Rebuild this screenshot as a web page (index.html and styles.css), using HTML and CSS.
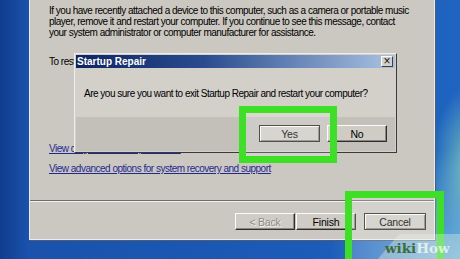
FILE: index.html
```html
<!DOCTYPE html>
<html>
<head>
	<meta charset="UTF-8">
	<title>Startup Repair</title>
	<link rel="stylesheet" href="styles.css">
</head>
<body>
<div class="screen">
	<div class="window">
		<p class="msg">If you have recently attached a device to this computer, such as a camera or portable music<br>
		player, remove it and restart your computer. If you continue to see this message, contact<br>
		your system administrator or computer manufacturer for assistance.</p>
		<p class="restart">To restart your computer, click Finish.</p>
		<a class="link link-details" href="#">View diagnostic and repair details</a>
		<a class="link link-advanced" href="#">View advanced options for system recovery and support</a>
		<div class="footer">
			<button class="btn btn-back" disabled>&lt; Back</button>
			<button class="btn btn-finish">Finish</button>
			<button class="btn btn-cancel">Cancel</button>
		</div>
	</div>

	<!-- confirm box over the wizard -->
	<div class="dialog">
		<div class="titlebar">
			<span>Startup Repair</span>
			<span class="close">×</span>
		</div>
		<div class="dialog-body">Are you sure you want to exit Startup Repair and restart your computer?</div>
		<div class="dialog-buttons">
			<button class="btn btn-default btn-yes">Yes</button>
			<button class="btn btn-no">No</button>
		</div>
	</div>

	<div class="highlight hl-yes"></div>
	<div class="highlight hl-cancel"></div>
	<div class="wikihow"><span class="wiki">wiki</span><span class="how">How</span></div>
</div>
</body>
</html>
```

FILE: styles.css
```css
body {
	margin: 0;
}
.screen {
	position: relative;
	width: 460px;
	height: 259px;
	overflow: hidden;
	font-family: "Liberation Sans", Arial, sans-serif;
	font-size: 10px;
	letter-spacing: -0.5px;
	background:
		radial-gradient(ellipse 40px 80px at 472px 165px, rgba(150, 225, 190, 0.75), transparent),
		radial-gradient(ellipse 140px 110px at 470px 259px, rgba(120, 190, 225, 0.9), transparent),
		linear-gradient(90deg, #113c8e 0, #1a52ac 28px, #1b5ab6 60%, #1f64c0 100%);
}
.window {
	box-sizing: border-box;
	display: flex;
	flex-direction: column;
	width: 406px;
	height: 240px;
	margin-left: 29px;
	background: #cbc8c1;
	border: 1px solid #ecebe7;
	border-top: none;
	box-shadow: 1px 1px 0 #4c5d7a;
}
.msg {
	margin: 0;
	padding: 5px 0 0 19px;
	line-height: 11px;
	white-space: nowrap;
}
.restart {
	margin: 18px 0 0 19px;
	line-height: 11px;
}
.link {
	display: block;
	margin-left: 19px;
	line-height: 11px;
	color: #1f2a8c;
}
.link-details {
	margin-top: 76px;
}
.link-advanced {
	margin-top: 9px;
}
.footer {
	display: flex;
	justify-content: flex-end;
	margin-top: auto;
	height: 39px;
	box-sizing: border-box;
	padding: 12px 8px 0 0;
	border-top: 1px solid #6f6d68;
	box-shadow: inset 0 1px 0 #f2f1ed;
}
.btn {
	box-sizing: border-box;
	height: 17px;
	width: 60px;
	padding: 0;
	font-family: inherit;
	font-size: 10.5px;
	letter-spacing: -0.2px;
	color: #000;
	background: #cfccc5;
	border: 1px solid;
	border-color: #fbfbf8 #2e2e2e #2e2e2e #fbfbf8;
	box-shadow: inset -1px -1px 0 #8a8780;
}
.btn-back {
	color: #8c8a85;
	text-shadow: 1px 1px 0 #f2f2ef;
}
.btn-finish {
	margin-left: 1px;
}
.btn-cancel {
	width: 62px;
	margin-left: 8px;
	border-color: #2e2e2e;
	box-shadow: inset 1px 1px 0 #fbfbf8, inset -1px -1px 0 #8a8780;
}
.dialog {
	position: absolute;
	left: 74px;
	top: 53px;
	width: 323px;
	height: 100px;
	box-sizing: border-box;
	display: flex;
	flex-direction: column;
	padding: 1px;
	background: #d3d0ca;
	border: 1px solid;
	border-color: #eeede9 #3a3a3a #3a3a3a #eeede9;
}
.titlebar {
	display: flex;
	align-items: center;
	justify-content: space-between;
	height: 13px;
	padding: 0 2px 0 1px;
	font-weight: bold;
	letter-spacing: 0;
	color: #fff;
	background: linear-gradient(90deg, #0c2465 0, #2a4c8e 40%, #a9c3e2 100%);
}
.close {
	box-sizing: border-box;
	width: 12px;
	height: 11px;
	font-weight: normal;
	font-size: 12px;
	line-height: 8px;
	text-align: center;
	color: #111;
	background: #d4d1cb;
	border: 1px solid;
	border-color: #fff #404040 #404040 #fff;
}
.dialog-body {
	height: 49px;
	box-sizing: border-box;
	padding: 20px 0 0 8px;
	line-height: 11px;
	white-space: nowrap;
}
.dialog-buttons {
	flex: 1;
	display: flex;
	justify-content: flex-end;
	gap: 7px;
	padding: 8px 8px 0 0;
	background: #c3c0b9;
}
.btn-yes {
	width: 61px;
}
.btn-default {
	border-color: #2a2a2a;
	box-shadow: inset 1px 1px 0 #fbfbf8, inset -1px -1px 0 #8a8780;
}
.highlight {
	position: absolute;
	box-sizing: border-box;
	border: 7px solid #3de025;
	background: rgba(255, 255, 255, 0.18);
}
.hl-yes {
	left: 239px;
	top: 106px;
	width: 98px;
	height: 57px;
}
.hl-cancel {
	left: 345px;
	top: 191px;
	width: 99px;
	height: 80px;
}
.wikihow {
	position: absolute;
	left: 385px;
	top: 240px;
	font-family: "DejaVu Serif", serif;
	font-weight: bold;
	font-size: 13.5px;
	letter-spacing: 0;
	line-height: 16px;
}
.wikihow::before {
	content: "";
	position: absolute;
	left: -8px;
	top: -6px;
	width: 84px;
	height: 26px;
	background: rgba(235, 245, 230, 0.35);
	clip-path: polygon(0 100%, 22px 0, 100% 0, 100% 100%);
}
.wiki {
	position: relative;
	color: #3d6b36;
}
.how {
	position: relative;
	color: rgba(240, 248, 236, 0.85);
}
```
